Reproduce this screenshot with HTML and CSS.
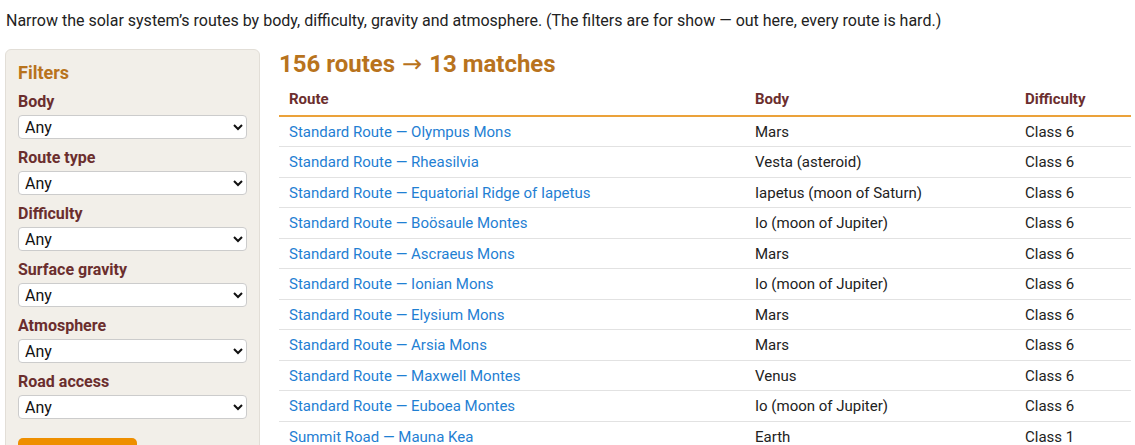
FILE: index.html
```html
<!DOCTYPE html>
<html lang="en">

<head>
  <meta charset="UTF-8" />
  <meta name="viewport" content="width=device-width, initial-scale=1.0" />
  <title>Solar System Routes</title>
  <link rel="stylesheet" href="styles.css">
</head>

<body>
  <p class="intro">Narrow the solar system’s routes by body, difficulty, gravity and atmosphere. (The filters are for show — out here, every route is hard.)</p>

  <div class="layout">
    <aside class="filters">
      <h2>Filters</h2>
      <label class="field">
        <span>Body</span>
        <select><option>Any</option></select>
      </label>
      <label class="field">
        <span>Route type</span>
        <select><option>Any</option></select>
      </label>
      <label class="field">
        <span>Difficulty</span>
        <select><option>Any</option></select>
      </label>
      <label class="field">
        <span>Surface gravity</span>
        <select><option>Any</option></select>
      </label>
      <label class="field">
        <span>Atmosphere</span>
        <select><option>Any</option></select>
      </label>
      <label class="field">
        <span>Road access</span>
        <select><option>Any</option></select>
      </label>
      <button type="button" class="apply">Apply filters</button>
    </aside>

    <main class="results">
      <h1>156 routes <span class="arrow">→</span> 13 matches</h1>
      <table class="routes">
        <thead>
          <tr>
            <th class="col-route">Route</th>
            <th class="col-body">Body</th>
            <th>Difficulty</th>
          </tr>
        </thead>
        <tbody>
          <tr><td><a href="#">Standard Route — Olympus Mons</a></td><td>Mars</td><td>Class 6</td></tr>
          <tr><td><a href="#">Standard Route — Rheasilvia</a></td><td>Vesta (asteroid)</td><td>Class 6</td></tr>
          <tr><td><a href="#">Standard Route — Equatorial Ridge of Iapetus</a></td><td>Iapetus (moon of Saturn)</td><td>Class 6</td></tr>
          <tr><td><a href="#">Standard Route — Boösaule Montes</a></td><td>Io (moon of Jupiter)</td><td>Class 6</td></tr>
          <tr><td><a href="#">Standard Route — Ascraeus Mons</a></td><td>Mars</td><td>Class 6</td></tr>
          <tr><td><a href="#">Standard Route — Ionian Mons</a></td><td>Io (moon of Jupiter)</td><td>Class 6</td></tr>
          <tr><td><a href="#">Standard Route — Elysium Mons</a></td><td>Mars</td><td>Class 6</td></tr>
          <tr><td><a href="#">Standard Route — Arsia Mons</a></td><td>Mars</td><td>Class 6</td></tr>
          <tr><td><a href="#">Standard Route — Maxwell Montes</a></td><td>Venus</td><td>Class 6</td></tr>
          <tr><td><a href="#">Standard Route — Euboea Montes</a></td><td>Io (moon of Jupiter)</td><td>Class 6</td></tr>
          <tr><td><a href="#">Summit Road — Mauna Kea</a></td><td>Earth</td><td>Class 1</td></tr>
          <tr><td><a href="#">Standard Route — Pavonis Mons</a></td><td>Mars</td><td>Class 6</td></tr>
          <tr><td><a href="#">Standard Route — Skadi Mons</a></td><td>Venus</td><td>Class 6</td></tr>
        </tbody>
      </table>
    </main>
  </div>
</body>

</html>
```

FILE: styles.css
```css
body {
  margin: 0;
  padding: 0 4px 0 5px;
  font-family: Roboto, "Liberation Sans", Arial, sans-serif;
  font-size: 16px;
  color: #222;
  background: #fff;
}

.intro {
  margin: 11px 0 18px 1px;
  line-height: 20px;
}

.layout {
  display: grid;
  grid-template-columns: 255px 1fr;
  gap: 19px;
  align-items: start;
}

.filters {
  background-color: #f2efe9;
  border: 1px solid #e2ded7;
  border-radius: 6px;
  padding: 12px 12px 40px 12px;
  display: flex;
  flex-direction: column;
}

.filters h2 {
  margin: 0 0 8px 0;
  font-size: 18px;
  line-height: 22px;
  color: #b8731d;
}

.field {
  display: flex;
  flex-direction: column;
  gap: 3px;
  margin-bottom: 9px;
}

.field span {
  font-weight: bold;
  line-height: 20px;
  color: #6b2e2e;
}

.field select {
  height: 24px;
  font-family: inherit;
  font-size: 16px;
  color: #111;
  background-color: #fff;
  border: 1px solid #ccc;
  border-radius: 4px;
  padding: 0 2px;
}

.apply {
  align-self: flex-start;
  margin-top: 10px;
  width: 119px;
  height: 34px;
  border: none;
  border-radius: 5px;
  background-color: #ee8f00;
  color: #fff;
  font-family: inherit;
  font-size: 16px;
  font-weight: bold;
}

.results h1 {
  margin: 0 0 6px 0;
  font-size: 24px;
  line-height: 30px;
  color: #b8731d;
}

.arrow {
  font-family: "DejaVu Sans", sans-serif;
  font-weight: normal;
  margin: 0 1px;
}

.routes {
  width: 100%;
  border-collapse: collapse;
  table-layout: fixed;
  font-size: 15px;
}

.routes th {
  text-align: left;
  font-weight: bold;
  color: #6b2e2e;
  padding: 5px 10px;
  line-height: 19.5px;
  border-bottom: 2px solid #eba23a;
}

.col-route {
  width: 446px;
}

.col-body {
  width: 250px;
}

.routes td {
  padding: 6px 10px 4px 10px;
  line-height: 19.5px;
  border-bottom: 1px solid #e2e2e2;
}

.routes a {
  color: #1f80d3;
  text-decoration: none;
}
```
